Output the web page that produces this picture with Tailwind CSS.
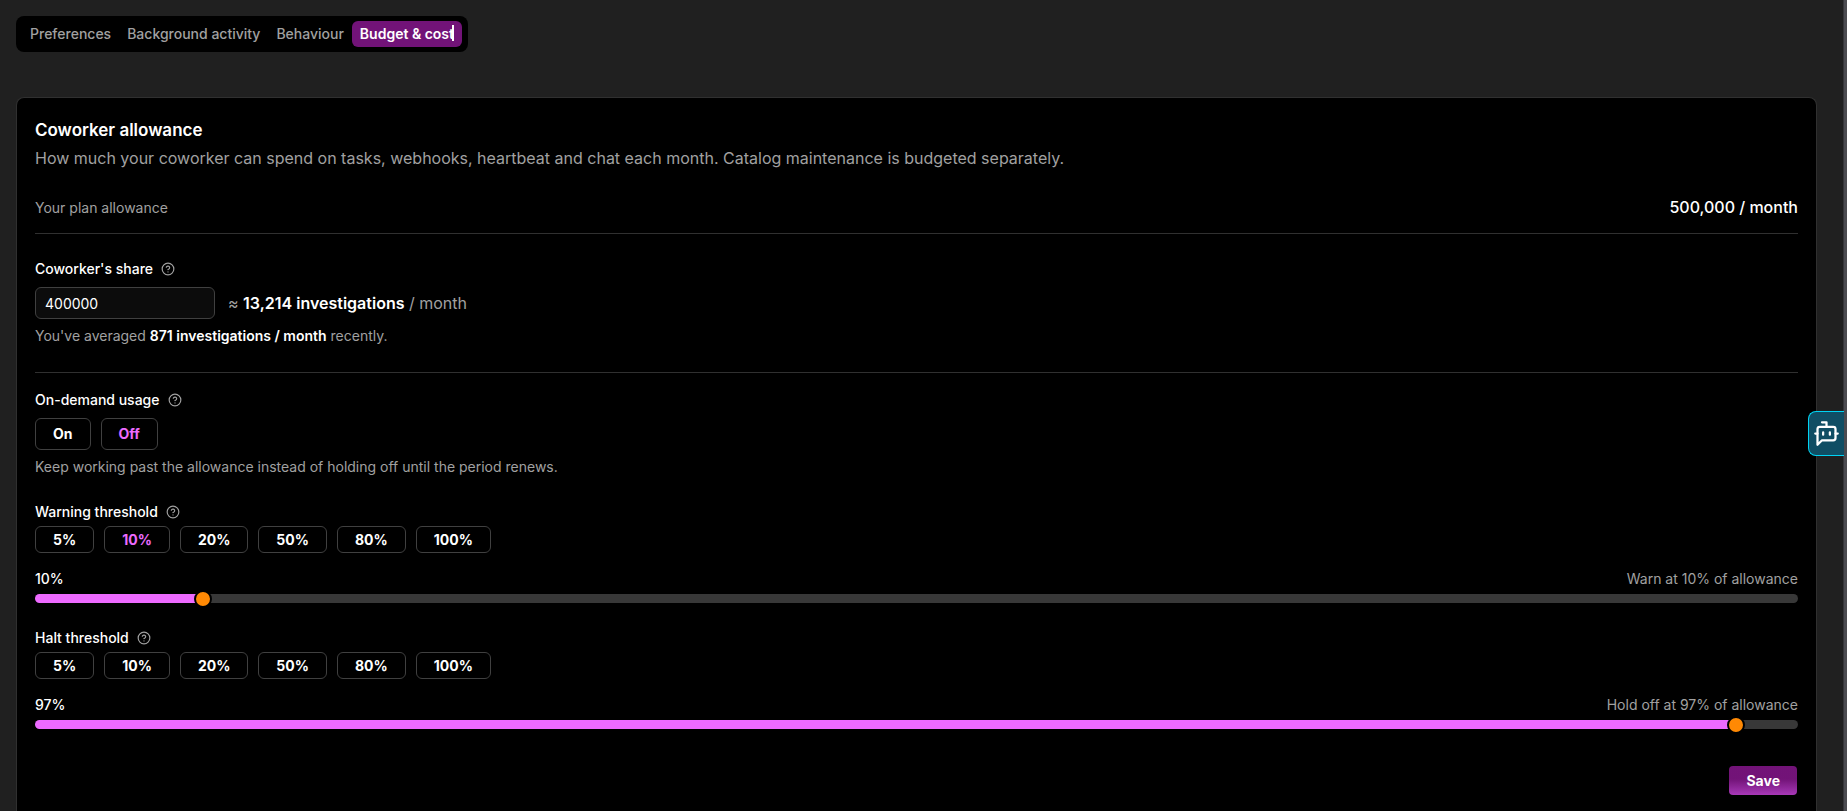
<!DOCTYPE html>
<html lang="en">
<head>
  <meta charset="UTF-8">
  <meta name="viewport" content="width=device-width, initial-scale=1.0">
  <title>Budget &amp; cost</title>
  <script src="https://cdn.jsdelivr.net/npm/@tailwindcss/browser@4"></script>
</head>

<body class="flex h-screen overflow-hidden bg-[#202020] font-['Inter',sans-serif] text-sm text-white">

  <!-- Icons -->
  <svg class="hidden">
    <symbol id="help" viewBox="0 0 24 24" fill="none" stroke="currentColor" stroke-width="2" stroke-linecap="round" stroke-linejoin="round">
      <circle cx="12" cy="12" r="10"/>
      <path d="M9.09 9a3 3 0 0 1 5.83 1c0 2-3 3-3 3"/>
      <path d="M12 17h.01"/>
    </symbol>
  </svg>

  <div class="flex min-w-0 flex-1 flex-col pt-4 pr-[26px] pl-4">

    <!-- Tabs -->
    <nav class="flex items-center self-start rounded-lg bg-black px-[6px] py-[5px] font-medium text-neutral-400">
      <a href="#" class="rounded-md px-2 py-[3px] leading-5">Preferences</a>
      <a href="#" class="rounded-md px-2 py-[3px] leading-5">Background activity</a>
      <a href="#" class="rounded-md px-2 py-[3px] leading-5">Behaviour</a>
      <a href="#" aria-current="page" class="relative rounded-md bg-fuchsia-900 px-2 py-[3px] leading-5 font-semibold text-white">
        Budget &amp; cost
        <span class="absolute top-1 right-2 h-4 w-0.5 bg-white"></span>
      </a>
    </nav>

    <main class="mt-[45px] flex-1 rounded-t-lg border border-b-0 border-[#303030] bg-black px-[18px] pt-5">
      <h1 class="text-[17px] leading-6 font-semibold">Coworker allowance</h1>
      <p class="mt-1 text-base leading-6 text-neutral-400">How much your coworker can spend on tasks, webhooks, heartbeat and chat each month. Catalog maintenance is budgeted separately.</p>

      <div class="mt-[25px] flex items-baseline justify-between border-b border-[#303030] pb-[14px]">
        <span class="leading-5 text-neutral-400">Your plan allowance</span>
        <span class="text-base leading-6 font-medium">500,000 / month</span>
      </div>

      <!-- Share -->
      <section class="border-b border-[#303030] pt-[25px] pb-[26px]">
        <div class="flex items-center gap-2">
          <label for="share" class="leading-5 font-medium">Coworker's share</label>
          <button type="button" aria-label="About coworker's share" class="text-neutral-400"><svg class="size-[14px]"><use href="#help"/></svg></button>
        </div>
        <div class="mt-2 flex items-center gap-[13px]">
          <input id="share" type="text" inputmode="numeric" value="400000" class="h-8 w-[180px] rounded-md border border-[#404040] bg-[#0c0c0c] px-[9px] text-sm">
          <p class="text-base leading-6 text-neutral-400">≈ <b class="font-semibold text-white">13,214 investigations</b> / month</p>
        </div>
        <p class="mt-[7px] leading-5 text-neutral-400">You've averaged <b class="font-semibold text-white">871 investigations / month</b> recently.</p>
      </section>

      <!-- On-demand -->
      <section class="pt-[17px]">
        <div class="flex items-center gap-2">
          <h2 class="leading-5 font-medium">On-demand usage</h2>
          <button type="button" aria-label="About on-demand usage" class="text-neutral-400"><svg class="size-[14px]"><use href="#help"/></svg></button>
        </div>
        <div class="mt-2 flex gap-[10px]">
          <button type="button" class="h-8 rounded-md border border-[#404040] px-[17px] font-bold">On</button>
          <button type="button" aria-pressed="true" class="h-8 rounded-md border border-[#404040] px-[17px] font-bold text-fuchsia-400">Off</button>
        </div>
        <p class="mt-[7px] leading-5 text-neutral-400">Keep working past the allowance instead of holding off until the period renews.</p>
      </section>

      <!-- Warning -->
      <section class="pt-[25px]">
        <div class="flex items-center gap-2">
          <label for="warn" class="leading-5 font-medium">Warning threshold</label>
          <button type="button" aria-label="About warning threshold" class="text-neutral-400"><svg class="size-[14px]"><use href="#help"/></svg></button>
        </div>
        <div class="mt-1 flex gap-[10px]">
          <button type="button" class="h-[27px] rounded-md border border-[#404040] px-[17px] font-bold">5%</button>
          <button type="button" aria-pressed="true" class="h-[27px] rounded-md border border-[#404040] px-[17px] font-bold text-fuchsia-400">10%</button>
          <button type="button" class="h-[27px] rounded-md border border-[#404040] px-[17px] font-bold">20%</button>
          <button type="button" class="h-[27px] rounded-md border border-[#404040] px-[17px] font-bold">50%</button>
          <button type="button" class="h-[27px] rounded-md border border-[#404040] px-[17px] font-bold">80%</button>
          <button type="button" class="h-[27px] rounded-md border border-[#404040] px-[17px] font-bold">100%</button>
        </div>
        <div class="mt-4 flex items-center justify-between leading-5">
          <output for="warn" class="font-medium">10%</output>
          <span class="text-neutral-400">Warn at 10% of allowance</span>
        </div>
        <input id="warn" type="range" min="1" max="100" value="10" style="background-image: linear-gradient(to right, #ed6aff 9.5%, transparent 9.5%)" class="mt-[5px] block h-[9px] w-full appearance-none rounded-full bg-[#383838] [&::-webkit-slider-thumb]:size-[18px] [&::-webkit-slider-thumb]:appearance-none [&::-webkit-slider-thumb]:rounded-full [&::-webkit-slider-thumb]:border-2 [&::-webkit-slider-thumb]:border-black [&::-webkit-slider-thumb]:bg-orange-400">
      </section>

      <!-- Halt -->
      <section class="pt-[25px]">
        <div class="flex items-center gap-2">
          <label for="halt" class="leading-5 font-medium">Halt threshold</label>
          <button type="button" aria-label="About halt threshold" class="text-neutral-400"><svg class="size-[14px]"><use href="#help"/></svg></button>
        </div>
        <div class="mt-1 flex gap-[10px]">
          <button type="button" class="h-[27px] rounded-md border border-[#404040] px-[17px] font-bold">5%</button>
          <button type="button" class="h-[27px] rounded-md border border-[#404040] px-[17px] font-bold">10%</button>
          <button type="button" class="h-[27px] rounded-md border border-[#404040] px-[17px] font-bold">20%</button>
          <button type="button" class="h-[27px] rounded-md border border-[#404040] px-[17px] font-bold">50%</button>
          <button type="button" class="h-[27px] rounded-md border border-[#404040] px-[17px] font-bold">80%</button>
          <button type="button" class="h-[27px] rounded-md border border-[#404040] px-[17px] font-bold">100%</button>
        </div>
        <div class="mt-4 flex items-center justify-between leading-5">
          <output for="halt" class="font-medium">97%</output>
          <span class="text-neutral-400">Hold off at 97% of allowance</span>
        </div>
        <input id="halt" type="range" min="1" max="100" value="97" style="background-image: linear-gradient(to right, #ed6aff 96.5%, transparent 96.5%)" class="mt-[5px] block h-[9px] w-full appearance-none rounded-full bg-[#383838] [&::-webkit-slider-thumb]:size-[18px] [&::-webkit-slider-thumb]:appearance-none [&::-webkit-slider-thumb]:rounded-full [&::-webkit-slider-thumb]:border-2 [&::-webkit-slider-thumb]:border-black [&::-webkit-slider-thumb]:bg-orange-400">
      </section>

      <div class="mt-[37px] flex justify-end pr-px">
        <button type="button" class="h-[29px] rounded bg-linear-to-b from-fuchsia-900 from-45% to-[#a838b8] px-[17px] font-bold">Save</button>
      </div>
    </main>
  </div>

  <!-- Window edge -->
  <div class="w-1 border-l border-[#36363a] bg-[#4b4b50]"></div>

  <!-- Assistant launcher -->
  <button type="button" aria-label="Open assistant" class="absolute top-[411px] right-[3px] flex h-[45px] w-9 items-center justify-center rounded-l-lg border border-r-0 border-cyan-400 bg-cyan-900">
    <svg class="size-[27px]" viewBox="0 0 24 24" fill="none" stroke="currentColor" stroke-width="2" stroke-linecap="round" stroke-linejoin="round">
      <path d="M12 6V2H8"/>
      <path d="m8 18-4 4V8a2 2 0 0 1 2-2h12a2 2 0 0 1 2 2v8a2 2 0 0 1-2 2Z"/>
      <path d="M2 12h2"/>
      <path d="M9 11v2"/>
      <path d="M15 11v2"/>
      <path d="M20 12h2"/>
    </svg>
  </button>

</body>
</html>
